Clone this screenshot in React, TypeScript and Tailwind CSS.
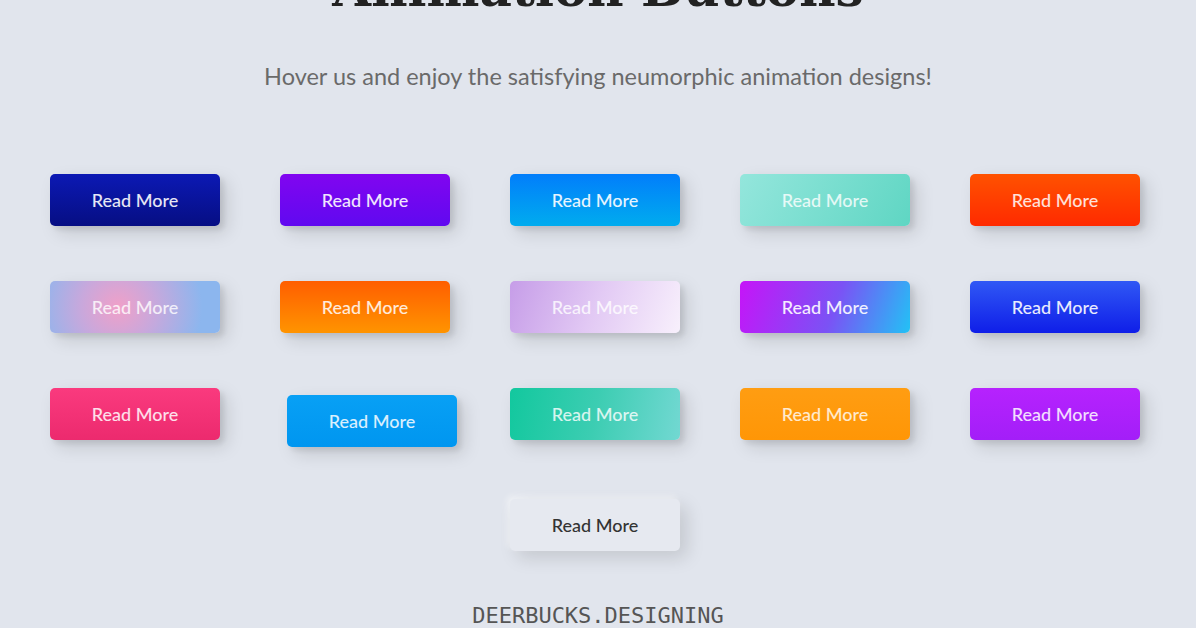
const buttons: { bg: string; text: string }[] = [
  { bg: "bg-[linear-gradient(0deg,#060e83_0%,#0c19b4_100%)]", text: "text-white/90" },
  { bg: "bg-[linear-gradient(0deg,#6009f0_0%,#8105f0_100%)]", text: "text-white/90" },
  { bg: "bg-[linear-gradient(0deg,#00acee_0%,#027efb_100%)]", text: "text-white/90" },
  { bg: "bg-[linear-gradient(120deg,#94e6dc_0%,#5fd6c3_100%)]", text: "text-white/80" },
  { bg: "bg-[linear-gradient(0deg,#ff2a00_0%,#ff5200_100%)]", text: "text-white/85" },

  { bg: "bg-[radial-gradient(circle_at_40%_50%,#f0a0c8_0%,#c8a8dc_35%,#8cb6ee_80%)]", text: "text-white/80" },
  { bg: "bg-[linear-gradient(0deg,#ff9400_0%,#ff5e00_100%)]", text: "text-white/85" },
  { bg: "bg-[linear-gradient(110deg,#c69de8_0%,#e2c9f4_50%,#f8f0fc_100%)]", text: "text-white/80" },
  { bg: "bg-[linear-gradient(110deg,#c614f8_0%,#7b52f5_55%,#22c2f5_100%)]", text: "text-white/90" },
  { bg: "bg-[linear-gradient(0deg,#0f1ee8_0%,#3058f5_100%)]", text: "text-white/90" },

  { bg: "bg-[linear-gradient(0deg,#ec2a6e_0%,#fa3a7e_100%)]", text: "text-white/85" },
  { bg: "bg-[linear-gradient(0deg,#0096f0_0%,#08a0f5_100%)]", text: "text-white/85" },
  { bg: "bg-[linear-gradient(100deg,#12c89e_0%,#3ccdb2_50%,#72d8d2_100%)]", text: "text-white/80" },
  { bg: "bg-[linear-gradient(0deg,#ff9606_0%,#ff9d12_100%)]", text: "text-white/80" },
  { bg: "bg-[linear-gradient(0deg,#a31ef8_0%,#b622fe_100%)]", text: "text-white/85" },
];

export default function App() {
  return (
    <div className="min-h-screen w-full overflow-hidden bg-[#e1e5ed] font-['Lato',sans-serif]">
      <h1 className="-mt-[36px] text-center font-['DejaVu_Serif',serif] text-[50px] font-bold leading-none text-[#222]">
        Animation Buttons
      </h1>
      <p className="mt-[48px] text-center text-[23.5px] leading-[28px] text-[#6a6a6a]">
        Hover us and enjoy the satisfying neumorphic animation designs!
      </p>

      <div className="mt-[84px] grid w-max grid-cols-[repeat(5,170px)] gap-x-[60px] gap-y-[55px] pl-[50px]">
        {buttons.map((b, i) => (
          <button
            key={i}
            className={`flex h-[52px] w-[170px] items-center justify-center rounded-[5px] text-[18px] font-medium shadow-[7px_7px_18px_0px_rgba(0,0,0,0.13),4px_4px_5px_0px_rgba(0,0,0,0.08)] ${b.bg} ${b.text} ${
              i === 11 ? "translate-x-[7px] translate-y-[7px] shadow-[2px_2px_6px_0px_rgba(0,0,0,0.12)]" : ""
            }`}
          >
            Read More
          </button>
        ))}
        <button className="col-start-3 mt-[4px] flex h-[52px] w-[170px] items-center justify-center rounded-[5px] bg-[#e6e9f0] text-[18px] font-medium text-[#333] shadow-[7px_7px_18px_0px_rgba(0,0,0,0.13),-3px_-3px_6px_0px_rgba(255,255,255,0.5)]">
          Read More
        </button>
      </div>

      <p className="mt-[54px] text-center font-['DejaVu_Sans_Mono',monospace] text-[22px] leading-none text-[#555]">
        DEERBUCKS.DESIGNING
      </p>
    </div>
  );
}
